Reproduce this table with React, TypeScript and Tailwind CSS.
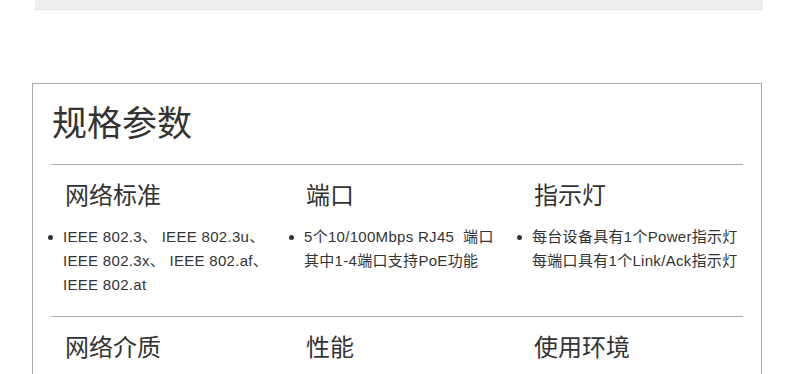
const FONT = "font-['Liberation_Sans','Noto_Sans_CJK_SC',sans-serif]"

type Spec = { title: string; lines: string[] }

const ROW1: Spec[] = [
  { title: '网络标准', lines: ['IEEE 802.3、 IEEE 802.3u、', 'IEEE 802.3x、 IEEE 802.af、', 'IEEE 802.at'] },
  { title: '端口', lines: ['5个10/100Mbps RJ45\u00a0\u00a0端口', '其中1-4端口支持PoE功能'] },
  { title: '指示灯', lines: ['每台设备具有1个Power指示灯', '每端口具有1个Link/Ack指示灯'] },
]

const ROW2: Spec[] = [
  { title: '网络介质', lines: [] },
  { title: '性能', lines: [] },
  { title: '使用环境', lines: [] },
]

function SpecCell({ spec }: { spec: Spec }) {
  return (
    <div className="flex flex-col">
      <h3 className="pl-[18px] text-[24px] leading-[30px] font-normal text-[#333]">{spec.title}</h3>
      {spec.lines.length > 0 && (
        <div className="mt-[14px] flex text-[15px] leading-[24px] tracking-[0.3px] text-[#333]">
          <div className="w-[16px] shrink-0 pt-[9.5px] pl-[1px]">
            <div className="w-[5px] h-[5px] rounded-full bg-[#333]" />
          </div>
          <div className="whitespace-pre">
            {spec.lines.map((l, i) => (
              <div key={i}>{l}</div>
            ))}
          </div>
        </div>
      )}
    </div>
  )
}

function SpecRow({ items }: { items: Spec[] }) {
  return (
    <div className="ml-[-4px] grid grid-cols-[241px_228px_1fr] pt-[16px] pb-[19px]">
      {items.map((s) => (
        <SpecCell key={s.title} spec={s} />
      ))}
    </div>
  )
}

export default function App() {
  return (
    <div className={`${FONT} bg-white w-[794px] h-[374px] overflow-hidden`}>
      <div className="ml-[35px] w-[728px] h-[10px] bg-[#eeeeee] border-b border-[#e4e4e4]" />
      <div className="mt-[73px] ml-[32px] w-[730px] h-[400px] border border-[#a9a9a9] px-[18px]">
        <h2 className="h-[80px] leading-[80px] text-[35px] font-normal text-[#333] pl-[1px]">规格参数</h2>
        <div className="h-px bg-[#aaaaaa]" />
        <SpecRow items={ROW1} />
        <div className="h-px bg-[#aaaaaa]" />
        <SpecRow items={ROW2} />
      </div>
    </div>
  )
}
